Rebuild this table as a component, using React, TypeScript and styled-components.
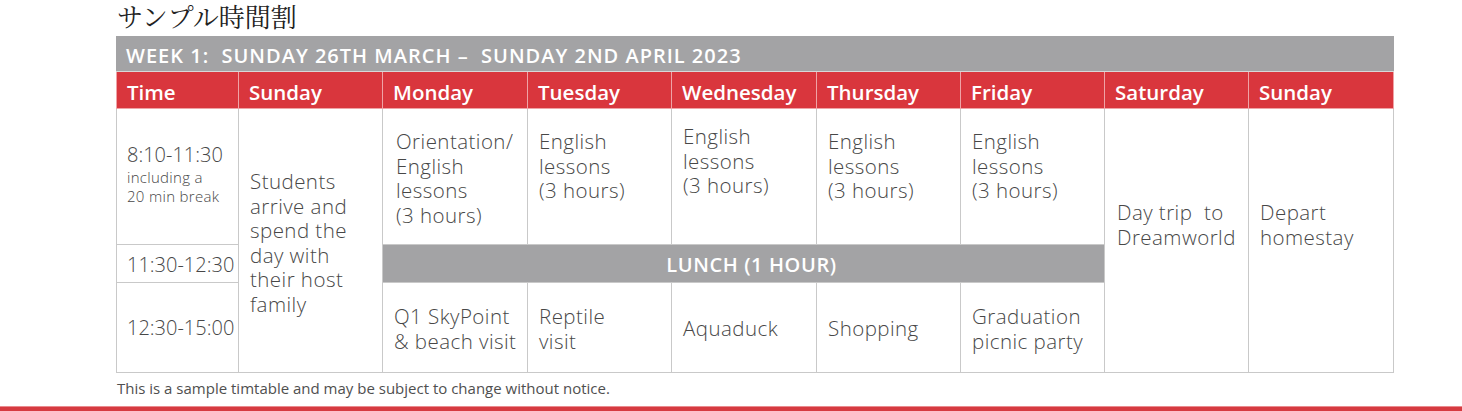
import React from "react";
import styled, { createGlobalStyle } from "styled-components";

const GlobalStyle = createGlobalStyle`
  body {
    margin: 0;
    background: #ffffff;
    font-family: "Open Sans", "Liberation Sans", sans-serif;
    color: #4a4a4a;
  }
`;

const Page = styled.div`
  width: 1462px;
  height: 411px;
  display: flex;
  flex-direction: column;
  overflow: hidden;
`;

const Title = styled.h1`
  margin: 0;
  height: 36px;
  box-sizing: border-box;
  padding: 2px 0 0 117px;
  font-family: "Liberation Serif", "Noto Serif CJK JP", "Noto Sans CJK JP", serif;
  font-size: 26px;
  font-weight: 400;
  line-height: 34px;
  color: #222222;
`;

const Table = styled.div`
  margin-left: 116px;
  width: 1278px;
  display: grid;
  grid-template-columns: 123px 144px 145px 144px 145px 144px 144px 144px 145px;
  grid-template-rows: 36px 37px 136px 38px 90px;
`;

const Banner = styled.div`
  grid-column: 1 / -1;
  grid-row: 1;
  background: #a3a3a5;
  color: #ffffff;
  font-size: 20px;
  font-weight: 600;
  letter-spacing: 1px;
  display: flex;
  align-items: center;
  padding: 3px 0 0 10px;
  white-space: pre;
  border-bottom: 1px solid #d8d8d8;
`;

const HeadCell = styled.div<{ $first?: boolean }>`
  grid-row: 2;
  background: #d9363d;
  color: #ffffff;
  font-size: 20.5px;
  font-weight: 600;
  display: flex;
  align-items: center;
  padding: 3px 0 0 10px;
  border-right: 1px solid #efa3a6;
  border-bottom: 1px solid #efa3a6;
  border-left: ${(p) => (p.$first ? "1px solid #efa3a6" : "none")};
`;

const Cell = styled.div<{
  $col: string;
  $row: string;
  $valign?: "start" | "center";
  $pt?: number;
  $pb?: number;
  $pl?: number;
}>`
  grid-column: ${(p) => p.$col};
  grid-row: ${(p) => p.$row};
  display: flex;
  flex-direction: column;
  justify-content: ${(p) => (p.$valign === "start" ? "flex-start" : "center")};
  padding: ${(p) => p.$pt ?? 4}px 4px ${(p) => p.$pb ?? 0}px ${(p) => p.$pl ?? 11}px;
  font-size: 20.5px;
  font-weight: 300;
  letter-spacing: 0.45px;
  line-height: 24.5px;
  color: #474747;
  border-right: 1px solid #c9c9c9;
  border-bottom: 1px solid #c9c9c9;
  white-space: pre;
`;

const TimeCell = styled(Cell)`
  font-size: 20px;
  letter-spacing: 0;
  border-left: 1px solid #c9c9c9;
`;

const Small = styled.span`
  font-size: 15px;
  letter-spacing: 0.3px;
  line-height: 19px;
`;

const Lunch = styled.div`
  grid-column: 3 / 8;
  grid-row: 4;
  background: #a3a3a5;
  color: #ffffff;
  font-size: 20px;
  font-weight: 600;
  letter-spacing: 0.6px;
  display: flex;
  align-items: center;
  justify-content: center;
  padding: 2px 0 0 16px;
  border-bottom: 1px solid #c9c9c9;
  border-right: 1px solid #c9c9c9;
`;

const Note = styled.p`
  margin: 0;
  padding: 5px 0 0 117px;
  font-size: 15px;
  line-height: 20px;
  color: #4f4f4f;
`;

const RedRule = styled.div`
  margin-top: auto;
  height: 4px;
  width: 100%;
  background: #d63a40;
  border-top: 1px solid #ea8a8e;
`;

const days = [
  "Sunday",
  "Monday",
  "Tuesday",
  "Wednesday",
  "Thursday",
  "Friday",
  "Saturday",
  "Sunday",
];

const morning = [
  { text: ["Orientation/", "English", "lessons", "(3 hours)"], pt: 20, pl: 13 },
  { text: ["English", "lessons", "(3 hours)"], pt: 20 },
  { text: ["English", "lessons", "(3 hours)"], pt: 15 },
  { text: ["English", "lessons", "(3 hours)"], pt: 20 },
  { text: ["English", "lessons", "(3 hours)"], pt: 20 },
];

const afternoon = [
  { text: ["Q1 SkyPoint", "& beach visit"], pl: 11 },
  { text: ["Reptile", "visit"] },
  { text: ["Aquaduck"] },
  { text: ["Shopping"] },
  { text: ["Graduation", "picnic party"] },
];

const Lines = ({ lines }: { lines: string[] }) => (
  <>
    {lines.map((l, i) => (
      <span key={i}>{l}</span>
    ))}
  </>
);

export default function App() {
  return (
    <Page>
      <GlobalStyle />
      <Title>サンプル時間割</Title>
      <Table>
        <Banner>{"WEEK 1:  SUNDAY 26TH MARCH –  SUNDAY 2ND APRIL 2023"}</Banner>

        <HeadCell $first>Time</HeadCell>
        {days.map((d, i) => (
          <HeadCell key={i}>{d}</HeadCell>
        ))}

        <TimeCell $col="1" $row="3" $pl={10} $pb={8}>
          <span>8:10-11:30</span>
          <Small>including a</Small>
          <Small>20 min break</Small>
        </TimeCell>
        <TimeCell $col="1" $row="4" $pl={10}>
          11:30-12:30
        </TimeCell>
        <TimeCell $col="1" $row="5" $pl={10} $pt={2}>
          12:30-15:00
        </TimeCell>

        <Cell $col="2" $row="3 / 6">
          <Lines
            lines={["Students", "arrive and", "spend the", "day with", "their host", "family"]}
          />
        </Cell>

        {morning.map((m, i) => (
          <Cell
            key={"m" + i}
            $col={String(i + 3)}
            $row="3"
            $valign="start"
            $pt={m.pt}
            $pl={m.pl}
          >
            <Lines lines={m.text} />
          </Cell>
        ))}

        <Lunch>LUNCH (1 HOUR)</Lunch>

        {afternoon.map((a, i) => (
          <Cell key={"a" + i} $col={String(i + 3)} $row="5" $pl={a.pl} $pt={2}>
            <Lines lines={a.text} />
          </Cell>
        ))}

        <Cell $col="8" $row="3 / 6" $pb={36} $pl={12}>
          <Lines lines={["Day trip  to", "Dreamworld"]} />
        </Cell>
        <Cell $col="9" $row="3 / 6" $pb={36}>
          <Lines lines={["Depart", "homestay"]} />
        </Cell>
      </Table>
      <Note>This is a sample timtable and may be subject to change without notice.</Note>
      <RedRule />
    </Page>
  );
}
